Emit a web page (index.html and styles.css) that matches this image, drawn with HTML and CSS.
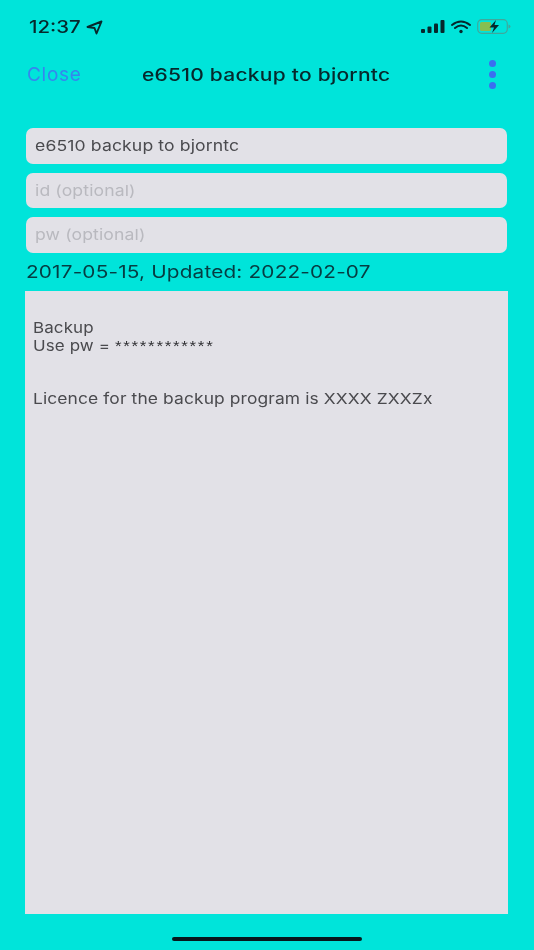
FILE: index.html
```html
<!DOCTYPE html>
<html lang="en">
<head>
<meta charset="utf-8">
<title>e6510 backup to bjorntc</title>
<link rel="stylesheet" href="styles.css">
</head>
<body>
<div class="screen">
  <header class="status">
    <div class="status-left">
      <span class="time wide">12:37</span>
      <svg class="loc" width="17" height="15" viewBox="0 0 17 15"><path d="M1.500 7 15.500 1.500 10.500 13.500 8.500 8Z" fill="none" stroke="#06282c" stroke-width="1.900" stroke-linejoin="round"/></svg>
    </div>
    <div class="status-right">
      <svg width="24" height="14" viewBox="0 0 24 14"><rect x="0" y="9" width="4" height="4" rx="1" fill="#06282c"/><rect x="6.500" y="6.500" width="4" height="6.500" rx="1" fill="#06282c"/><rect x="13" y="3.500" width="4" height="9.500" rx="1" fill="#06282c"/><rect x="19.500" y="0" width="4" height="13" rx="1" fill="#06282c"/></svg>
      <svg width="20" height="14" viewBox="0 0 20 14"><path d="M1 5Q10-2 19 5M4 8Q10 3 16 8" fill="none" stroke="#06282c" stroke-width="2" stroke-linecap="round"/><circle cx="10" cy="11.500" r="1.700" fill="#06282c"/></svg>
      <svg width="35" height="15" viewBox="0 0 35 15"><rect x="0.700" y="0.700" width="29.600" height="13.600" rx="4" fill="none" stroke="#3fa89c" stroke-width="1.200"/><rect x="3" y="3" width="11" height="9" rx="1.500" fill="#86bf52"/><path d="M31.500 5.500v4q2-.5 2-2t-2-2Z" fill="#3fa89c"/><path d="M19 1 12.500 8.500h4.500l-2 5.500 7-8h-4.500Z" fill="#06282c"/></svg>
    </div>
  </header>
  <nav class="nav">
    <span class="close">Close</span>
    <h1 class="title"><span class="wide">e6510 backup to bjorntc</span></h1>
    <div class="more"><i></i><i></i><i></i></div>
  </nav>
  <main class="content">
    <div class="field"><span class="wide">e6510 backup to bjorntc</span></div>
    <div class="field placeholder"><span class="wide">id (optional)</span></div>
    <div class="field placeholder"><span class="wide">pw (optional)</span></div>
    <p class="dates"><span class="wide">2017-05-15, Updated: 2022-02-07</span></p>
    <div class="notes">
      <p class="wide">Backup<br>Use pw = <span class="stars">************</span></p>
      <p class="wide licence">Licence for the backup program is XXXX ZXXZx</p>
    </div>
  </main>
  <div class="home-wrap"><div class="home"></div></div>
</div>
</body>
</html>
```

FILE: styles.css
```css
* { box-sizing: border-box; }
html, body { margin: 0; height: 100%; }
body { background: #00e4da; font-family: Inter, "Liberation Sans", sans-serif; color: #06282c; }
.screen { width: 534px; height: 950px; display: flex; flex-direction: column; overflow: hidden; filter: blur(0.45px); }
.wide { display: inline-block; transform: scaleX(1.174); transform-origin: left center; white-space: nowrap; }
.status { height: 52px; padding: 17px 22px 0 29px; display: flex; justify-content: space-between; align-items: flex-start; }
.status-left { display: flex; align-items: center; gap: 12px; }
.time { font-size: 17px; line-height: 20px; font-weight: 500; transform: scaleX(1.2); width: 45px; }
.status-right { display: flex; align-items: center; gap: 6px; margin-top: 2px; }
.nav { height: 44px; padding: 0 38px 0 27px; display: flex; align-items: center; justify-content: space-between; position: relative; }
.close { font-size: 19px; color: #3586ee; letter-spacing: 0.7px; }
.title { margin: 0; font-size: 17.500px; font-weight: 500; letter-spacing: 0.2px; color: #06282c; position: absolute; left: 142px; }
.title .wide { transform: scaleX(1.2); }
.more { display: flex; flex-direction: column; gap: 4px; }
.more i { display: block; width: 7px; height: 7px; border-radius: 50%; background: #3a6ff0; }
.content { padding: 32px 27px 0 25px; display: flex; flex-direction: column; }
.field { height: 35.500px; margin: 0 0 9px 1px; padding: 0 9px; display: flex; align-items: center; background: #e2e1e7; border-radius: 7px; font-size: 15px; letter-spacing: 0.1px; color: #4a4a4e; }
.placeholder { color: #b9b9bf; }
.dates { margin: -1px 0 8px 1px; height: 22px; line-height: 22px; font-size: 17.500px; letter-spacing: 0.15px; color: #063c42; }
.dates .wide { transform: scaleX(1.186); }
.notes { height: 623px; margin-right: -1px; padding: 28px 7px 0 7.500px; background: #e2e1e7; font-size: 15px; line-height: 18px; letter-spacing: 0.1px; color: #4a4a4e; }
.notes p { margin: 0; }
.notes .wide { transform: scaleX(1.13); }
.notes .licence { margin-top: 35px; transform: scaleX(1.16); }
.stars { font-family: "Liberation Sans", sans-serif; letter-spacing: 1.500px; color: #2e2e32; }
.home-wrap { flex: 1; display: flex; justify-content: center; padding-top: 23px; }
.home { width: 190px; height: 4px; border-radius: 2px; background: #06181c; }
```
